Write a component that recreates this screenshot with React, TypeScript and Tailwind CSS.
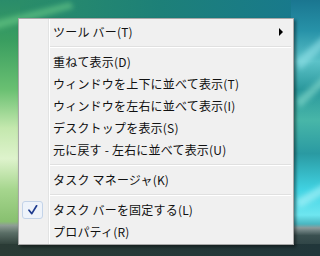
import React from "react";

type Item =
  | { kind: "item"; label: string; submenu?: boolean; checked?: boolean }
  | { kind: "sep" };

const items: Item[] = [
  { kind: "item", label: "ツール バー(T)", submenu: true },
  { kind: "sep" },
  { kind: "item", label: "重ねて表示(D)" },
  { kind: "item", label: "ウィンドウを上下に並べて表示(T)" },
  { kind: "item", label: "ウィンドウを左右に並べて表示(I)" },
  { kind: "item", label: "デスクトップを表示(S)" },
  { kind: "item", label: "元に戻す - 左右に並べて表示(U)" },
  { kind: "sep" },
  { kind: "item", label: "タスク マネージャ(K)" },
  { kind: "sep" },
  { kind: "item", label: "タスク バーを固定する(L)", checked: true },
  { kind: "item", label: "プロパティ(R)" },
];

function Wallpaper() {
  return (
    <svg
      width="320"
      height="256"
      viewBox="0 0 320 256"
      className="col-start-1 row-start-1 block"
    >
      <defs>
        <linearGradient id="base" x1="0" y1="0" x2="1" y2="0">
          <stop offset="0" stopColor="#2c8f66" />
          <stop offset="0.5" stopColor="#1d8078" />
          <stop offset="1" stopColor="#177890" />
        </linearGradient>
        <linearGradient id="left" x1="0" y1="0" x2="0" y2="1">
          <stop offset="0" stopColor="#2a8c6a" />
          <stop offset="0.16" stopColor="#3a9e60" />
          <stop offset="0.35" stopColor="#6ac072" />
          <stop offset="0.5" stopColor="#c4e8ae" />
          <stop offset="0.62" stopColor="#def3cc" />
          <stop offset="0.74" stopColor="#a6d68e" />
          <stop offset="0.865" stopColor="#88c070" />
          <stop offset="0.88" stopColor="#8e9e94" />
          <stop offset="0.91" stopColor="#5a6e66" />
          <stop offset="0.96" stopColor="#2c3d37" />
          <stop offset="1" stopColor="#233330" />
        </linearGradient>
        <linearGradient id="right" x1="0" y1="0" x2="0" y2="1">
          <stop offset="0" stopColor="#1a7690" />
          <stop offset="0.12" stopColor="#2792a8" />
          <stop offset="0.24" stopColor="#5cc2c8" />
          <stop offset="0.35" stopColor="#2a989c" />
          <stop offset="0.47" stopColor="#48b6a8" />
          <stop offset="0.6" stopColor="#2a9aa2" />
          <stop offset="0.74" stopColor="#40d2e2" />
          <stop offset="0.84" stopColor="#6ee6f0" />
          <stop offset="0.875" stopColor="#4ab6c0" />
          <stop offset="0.89" stopColor="#8a9a9a" />
          <stop offset="0.92" stopColor="#3a5050" />
          <stop offset="1" stopColor="#23363a" />
        </linearGradient>
        <linearGradient id="bottom" x1="0" y1="0" x2="1" y2="0">
          <stop offset="0" stopColor="#2a3b35" />
          <stop offset="1" stopColor="#21363a" />
        </linearGradient>
        <filter id="blur" x="-20%" y="-20%" width="140%" height="140%">
          <feGaussianBlur stdDeviation="2.5" />
        </filter>
      </defs>
      <rect x="0" y="0" width="320" height="256" fill="url(#base)" />
      <rect x="0" y="0" width="20" height="256" fill="url(#left)" />
      <rect x="291" y="0" width="29" height="256" fill="url(#right)" />
      <rect x="0" y="244" width="320" height="12" fill="url(#bottom)" />
      <g filter="url(#blur)" opacity="0.55">
        <path d="M-10 22 L70 2 L74 8 L-6 30 Z" fill="#6fd08a" />
        <path d="M296 60 L330 30 L334 38 L300 70 Z" fill="#9ae6ec" />
        <path d="M296 100 L330 70 L334 76 L300 108 Z" fill="#8ee0d0" />
        <path d="M296 200 L330 180 L334 188 L300 208 Z" fill="#b8f6fa" />
      </g>
    </svg>
  );
}

function Check() {
  return (
    <svg width="10" height="10" viewBox="0 0 10 10">
      <path
        d="M1 5.2 L3.8 8.6 L8.6 0.8"
        fill="none"
        stroke="#1e3b8f"
        strokeWidth="1.7"
        strokeLinecap="round"
        strokeLinejoin="round"
      />
    </svg>
  );
}

export default function App() {
  return (
    <div className="grid w-[320px] h-[256px] overflow-hidden">
      <Wallpaper />
      <div className="col-start-1 row-start-1 pt-[18px] pl-[18px]">
        <div className="w-[276px] border border-[#a8a8a8] bg-[#f0f0f0] shadow-[2px_2px_3px_rgba(0,0,0,0.45)]">
          <div
            className="pt-[2px] pb-[1px] bg-[linear-gradient(to_right,transparent_29px,#e2e3e3_29px,#e2e3e3_30px,#ffffff_30px,#ffffff_31px,transparent_31px)] text-[12px] tracking-[0.2px] text-[#111]"
            style={{ fontFamily: '"Noto Sans CJK JP", "Noto Sans", sans-serif' }}
          >
            {items.map((it, i) =>
              it.kind === "sep" ? (
                <div key={i} className="h-[8px] flex flex-col justify-center ml-[31px] mr-[2px]">
                  <div className="h-px bg-[#e0e0e0]" />
                  <div className="h-px bg-white" />
                </div>
              ) : (
                <div key={i} className="h-[22px] flex items-center">
                  <div className="w-[34px] h-full flex items-center pl-[3px]">
                    {it.checked ? (
                      <div className="w-[21px] h-[18px] rounded-[3px] border border-[#c3d3e8] bg-[#eef3fa] flex items-center justify-center">
                        <Check />
                      </div>
                    ) : null}
                  </div>
                  <span className="flex-1 leading-[22px] whitespace-nowrap">{it.label}</span>
                  {it.submenu ? (
                    <span className="mr-[10px] w-0 h-0 border-y-[4px] border-y-transparent border-l-[4px] border-l-black" />
                  ) : null}
                </div>
              )
            )}
          </div>
        </div>
      </div>
    </div>
  );
}
